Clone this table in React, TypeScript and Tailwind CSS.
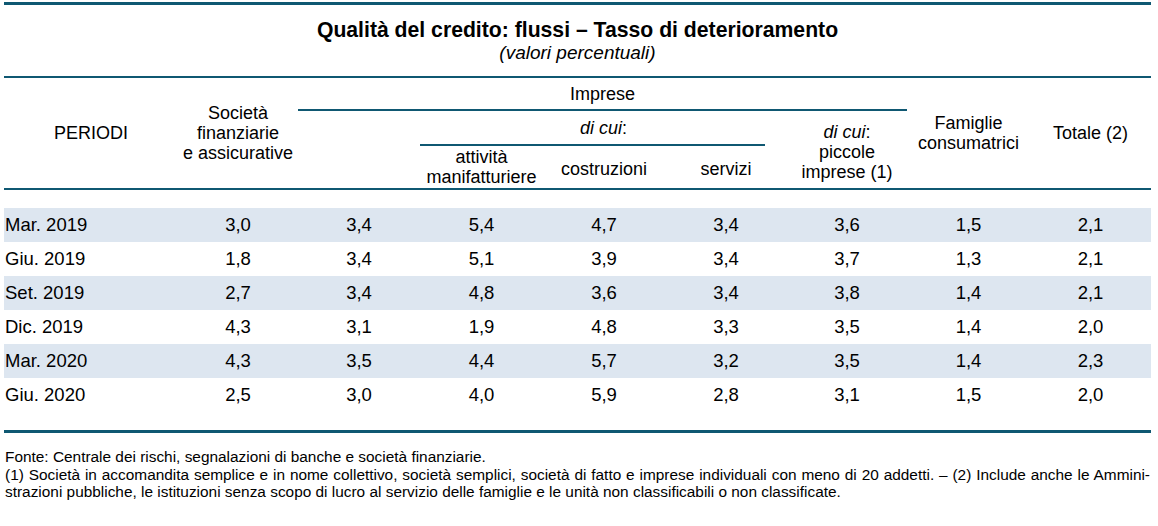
const rows = [
  ['Mar. 2019', '3,0', '3,4', '5,4', '4,7', '3,4', '3,6', '1,5', '2,1'],
  ['Giu. 2019', '1,8', '3,4', '5,1', '3,9', '3,4', '3,7', '1,3', '2,1'],
  ['Set. 2019', '2,7', '3,4', '4,8', '3,6', '3,4', '3,8', '1,4', '2,1'],
  ['Dic. 2019', '4,3', '3,1', '1,9', '4,8', '3,3', '3,5', '1,4', '2,0'],
  ['Mar. 2020', '4,3', '3,5', '4,4', '5,7', '3,2', '3,5', '1,4', '2,3'],
  ['Giu. 2020', '2,5', '3,0', '4,0', '5,9', '2,8', '3,1', '1,5', '2,0'],
]

const cols = 'grid grid-cols-[174px_120px_122px_123px_122px_122px_120px_123px_121px]'

export default function App() {
  return (
    <div
      className="w-[1158px] h-[526px] bg-white text-black"
      style={{ fontFamily: '"Liberation Sans", Arial, sans-serif' }}
    >
      <div className="ml-[4px] w-[1147px] pt-[2px]">
        <div className="h-[3px] bg-[#0f5872]" />
        <div className="text-center pt-[13px] h-[71px]">
          <h1 className="text-[21.2px] font-bold leading-[24px]">
            Qualità del credito: flussi – Tasso di deterioramento
          </h1>
          <p className="text-[19px] italic leading-[22px]">(valori percentuali)</p>
        </div>
        <div className="h-[2px] bg-[#0f5872]" />

        {/* intestazione */}
        <div className={`${cols} grid-rows-[33px_35px_42px] text-[18px] leading-[20px] text-center`}>
          <div className="row-span-3 flex items-center justify-center">PERIODI</div>
          <div className="row-span-3 flex items-center justify-center">
            Società
            <br />
            finanziarie
            <br />e assicurative
          </div>
          <div className="col-span-5 flex items-center justify-center border-b-2 border-[#0f5872]">
            Imprese
          </div>
          <div className="row-span-3 col-start-8 row-start-1 flex items-center justify-center">
            Famiglie
            <br />
            consumatrici
          </div>
          <div className="row-span-3 col-start-9 row-start-1 flex items-center justify-center">
            Totale (2)
          </div>
          <div className="row-span-2 col-start-3 row-start-2" />
          <div className="col-span-3 col-start-4 row-start-2 pr-[22px]">
            <div className="h-full flex items-center justify-center border-b-2 border-[#0f5872] pl-[22px]">
              <span>
                <i>di cui</i>:
              </span>
            </div>
          </div>
          <div className="row-span-2 col-start-7 row-start-2 flex items-center justify-center pt-[4px]">
            <span>
              <i>di cui</i>:
              <br />
              piccole
              <br />
              imprese (1)
            </span>
          </div>
          <div className="col-start-4 row-start-3 flex items-center justify-center">
            attività
            <br />
            manifatturiere
          </div>
          <div className="col-start-5 row-start-3 flex items-center justify-center pt-[4px]">
            costruzioni
          </div>
          <div className="col-start-6 row-start-3 flex items-center justify-center pt-[4px]">
            servizi
          </div>
        </div>
        <div className="h-[2px] bg-[#0f5872]" />

        {/* dati */}
        <div className="pt-[18px] pb-[18px] text-[18.5px]">
          {rows.map((r, i) => (
            <div key={r[0]} className={`${cols} h-[34px] items-center ${i % 2 === 0 ? 'bg-[#dde6f0]' : ''}`}>
              {r.map((v, j) => (
                <div key={j} className={j === 0 ? 'pl-[1px]' : 'text-center'}>
                  {v}
                </div>
              ))}
            </div>
          ))}
        </div>
        <div className="h-[3px] bg-[#0f5872]" />

        <div className="pt-[15px] pl-[1px] pr-[1px] text-[15.4px] leading-[17.5px]">
          <p>Fonte: Centrale dei rischi, segnalazioni di banche e società finanziarie.</p>
          <p className="text-justify [text-align-last:justify] whitespace-nowrap">
            (1) Società in accomandita semplice e in nome collettivo, società semplici, società di fatto e imprese
            individuali con meno di 20 addetti. – (2) Include anche le Ammini-
          </p>
          <p>
            strazioni pubbliche, le istituzioni senza scopo di lucro al servizio delle famiglie e le unità non
            classificabili o non classificate.
          </p>
        </div>
      </div>
    </div>
  )
}
